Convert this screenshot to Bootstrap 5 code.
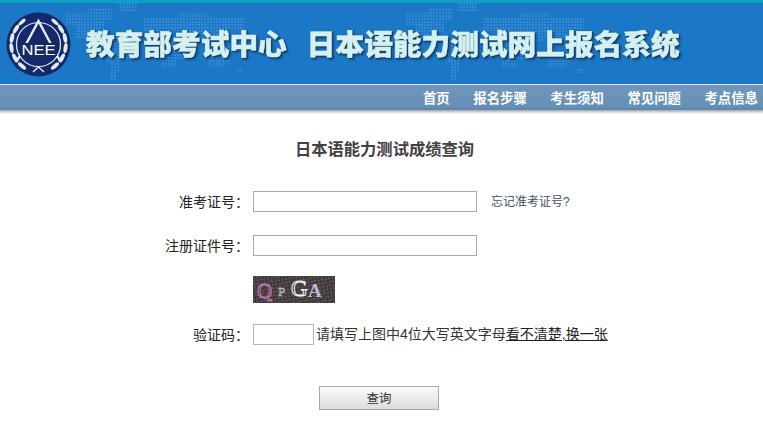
<!DOCTYPE html>
<html lang="zh-CN">
<head>
<meta charset="utf-8">
<title>日本语能力测试成绩查询</title>
<link href="https://cdn.jsdelivr.net/npm/bootstrap@5.3.0/dist/css/bootstrap.min.css" rel="stylesheet">
<style>
html,body{background:#fff;height:100%;}
body{font-family:"Liberation Sans","Noto Sans CJK SC",sans-serif;font-size:14px;color:#333;overflow:hidden;}
.topband{height:3px;background:#0f9fc4;}
.banner{position:relative;height:81px;background:#1a78c6;padding:0 0 0 6px;}
.mapdots{position:absolute;left:0;top:0;width:763px;height:81px;}
.brandmark{position:relative;width:65px;height:65px;margin-top:9px;flex:none;}
.sitename{position:relative;margin:20px 0 0 15px;font-family:"Noto Sans CJK SC",sans-serif;font-weight:900;font-size:28.7px;line-height:40px;white-space:nowrap;}
.sitename span{display:inline-block;color:#d4f1f0;-webkit-text-stroke:.5px #d4f1f0;filter:drop-shadow(1px 1px 0 #123a68) drop-shadow(1.5px 1.5px 1px #174a80);}
.sitename span + span{margin-left:20px;}
.menubar{height:26px;background:linear-gradient(#7097bb,#6690b6 85%,#5c86ad);border-top:1px solid #d9e4ee;padding-right:5px;}
.menubar .nav-link{padding:0;margin-left:23.5px;font-family:"Noto Sans CJK SC",sans-serif;font-weight:700;font-size:13.4px;line-height:25px;color:#fff;}
.menushade{height:4px;background:linear-gradient(#a9a9a9,#fff);}
.formtitle{font-family:"Noto Sans CJK SC",sans-serif;font-weight:700;font-size:16.3px;line-height:24px;color:#44403f;margin:22px 0 0;padding-left:6px;}
.fieldrow{margin-left:165px;}
.fieldlabel{width:84px;margin:0 4px 0 0;padding-top:2px;flex:none;text-align:right;font-size:14px;line-height:23px;color:#222;}
.fieldrow .form-control{border-radius:0;border:1px solid #aaa;padding:0 3px;height:21px;min-height:0;font-size:13px;background:#fff;box-shadow:none;}
.widefield{width:224px;flex:none;}
.fieldrow .form-control.shortfield{width:61px;flex:none;border-color:#b5b5b5;}
.forgotlink{margin-left:14px;font-size:12px;color:#44506a;text-decoration:none;}
.hinttext{margin-left:2px;font-size:14px;color:#333;white-space:nowrap;}
.hinttext a{color:#222;text-decoration:underline;}
.captchapic{display:block;width:82px;height:27px;}
.submitrow{margin:39px 0 0 319px;}
.submitrow .btn{width:120px;height:24px;padding:1px 0 0;border-radius:0;border:1px solid #aaa;font-size:12.5px;line-height:22px;color:#333;background:linear-gradient(#fbfbfb,#dcdcdc);}
</style>
</head>
<body>
<div class="topband"></div>
<header class="banner d-flex align-items-start">
<svg class="mapdots" viewBox="0 0 763 81" aria-hidden="true">
<defs>
<pattern id="dotgrid" width="3" height="3" patternUnits="userSpaceOnUse"><rect width="2" height="2" fill="#4f9bdb"/></pattern>
<g id="worldmap" fill="url(#dotgrid)" opacity=".5">
<path d="M6 10h22V6h24v12h-8v12H30v6H16V22H6z"/>
<path d="M58 0h20v8H58z"/>
<path d="M84 14h36v-4h30v4h34v12h-18v8h-22v4h-20V28H84z"/>
<path d="M96 38h22v10h10v8h-12v8h-14V52H96z"/>
<path d="M46 38h18v8h4v10h-8v12h-4v10h-6V60h-4z"/>
<path d="M120 34h12v10h-12z"/>
<path d="M148 50h22v10h-4v4h-18z"/>
<path d="M176 66h6v4h-6z"/>
</g>
</defs>
<use href="#worldmap" x="60"/>
<use href="#worldmap" x="400"/>
</svg>
<svg class="brandmark" viewBox="0 0 65 65" role="img" aria-label="NEEA">
<circle cx="32.5" cy="32.5" r="32" fill="#14296a"/>
<g fill="none" stroke="#e8eef5">
<circle cx="32.5" cy="32.5" r="22" stroke-width="1.2"/>
<path d="M11 49 32.5 9 54 49" stroke-width="2.4"/>
</g>
<g fill="#e4eaf2">
<ellipse cx="6" cy="26" rx="2" ry="5" transform="rotate(12 6 26)"/>
<ellipse cx="5.500" cy="36" rx="2" ry="5" transform="rotate(-8 5.500 36)"/>
<ellipse cx="9" cy="46" rx="2" ry="5" transform="rotate(-28 9 46)"/>
<ellipse cx="16" cy="54" rx="2" ry="5" transform="rotate(-50 16 54)"/>
<ellipse cx="10" cy="17" rx="2" ry="5" transform="rotate(32 10 17)"/>
<ellipse cx="16" cy="10" rx="1.800" ry="4.500" transform="rotate(48 16 10)"/>
<ellipse cx="59" cy="26" rx="2" ry="5" transform="rotate(-12 59 26)"/>
<ellipse cx="59.500" cy="36" rx="2" ry="5" transform="rotate(8 59.500 36)"/>
<ellipse cx="56" cy="46" rx="2" ry="5" transform="rotate(28 56 46)"/>
<ellipse cx="49" cy="54" rx="2" ry="5" transform="rotate(50 49 54)"/>
<ellipse cx="55" cy="17" rx="2" ry="5" transform="rotate(-32 55 17)"/>
<ellipse cx="49" cy="10" rx="1.800" ry="4.500" transform="rotate(-48 49 10)"/>
</g>
<path d="M27 60 32.500 55 38 60" fill="none" stroke="#e4eaf2" stroke-width="1.500"/>
<rect x="14" y="31" width="37" height="13" fill="#14296a"/>
<text x="32.500" y="43" text-anchor="middle" font-family="Liberation Sans,sans-serif" font-size="15" fill="#fff" textLength="34" lengthAdjust="spacingAndGlyphs">NEE</text>
</svg>
<h1 class="sitename"><span>教育部考试中心</span><span>日本语能力测试网上报名系统</span></h1>
</header>
<nav class="menubar d-flex justify-content-end nav">
<a class="nav-link" href="#">首页</a>
<a class="nav-link" href="#">报名步骤</a>
<a class="nav-link" href="#">考生须知</a>
<a class="nav-link" href="#">常见问题</a>
<a class="nav-link" href="#">考点信息</a>
</nav>
<div class="menushade"></div>
<main>
<h2 class="formtitle text-center">日本语能力测试成绩查询</h2>
<form>
<div class="fieldrow d-flex align-items-center" style="margin-top:29px">
<label class="fieldlabel" for="examno">准考证号：</label>
<input class="form-control widefield" id="examno" type="text">
<a class="forgotlink" href="#">忘记准考证号?</a>
</div>
<div class="fieldrow d-flex align-items-center" style="margin-top:19px">
<label class="fieldlabel" for="regno">注册证件号：</label>
<input class="form-control widefield" id="regno" type="text">
</div>
<div class="fieldrow d-flex" style="margin-top:18px">
<span class="fieldlabel"></span>
<svg class="captchapic" viewBox="0 0 82 27" role="img" aria-label="验证码图片">
<defs><pattern id="noise" width="5" height="5" patternUnits="userSpaceOnUse" patternTransform="rotate(35)">
<rect width="5" height="5" fill="#3c3636"/><path d="M0 1h3M2 3.500h3" stroke="#7a7270" stroke-width=".8"/></pattern></defs>
<rect width="82" height="27" fill="url(#noise)"/>
<text x="4" y="22" font-family="Liberation Serif,serif" font-size="21" fill="none" stroke="#c87ab8" stroke-width="1">Q</text>
<text x="25" y="20" font-family="Liberation Serif,serif" font-size="13" fill="none" stroke="#cfcfcf" stroke-width=".6">P</text>
<text x="38" y="20" font-family="Liberation Serif,serif" font-size="23" fill="none" stroke="#f2f2f2" stroke-width="1">G</text>
<text x="55" y="21" font-family="Liberation Serif,serif" font-weight="700" font-size="19" fill="#b6b8de">A</text>
</svg>
</div>
<div class="fieldrow d-flex align-items-center" style="margin-top:19px">
<label class="fieldlabel" for="captcha">验证码：</label>
<input class="form-control shortfield" id="captcha" type="text">
<span class="hinttext">请填写上图中4位大写英文字母<a href="#">看不清楚,换一张</a></span>
</div>
<div class="submitrow"><button class="btn" type="button">查询</button></div>
</form>
</main>
<script src="https://cdn.jsdelivr.net/npm/bootstrap@5.3.0/dist/js/bootstrap.bundle.min.js"></script>
</body>
</html>
